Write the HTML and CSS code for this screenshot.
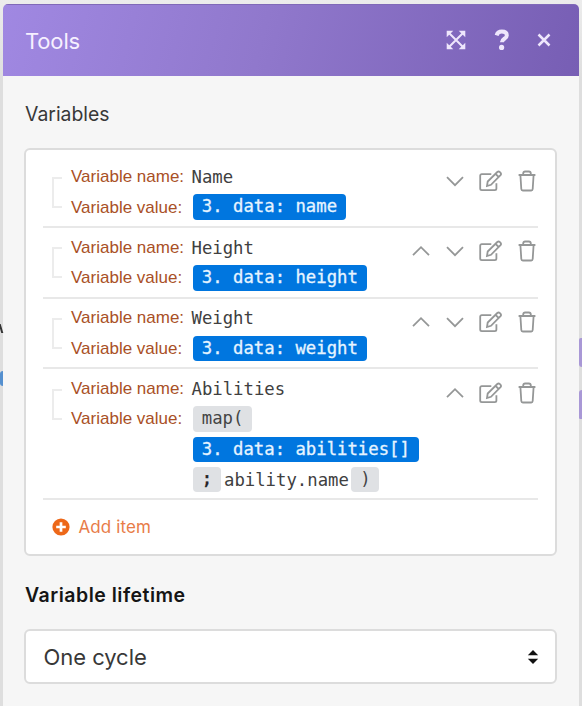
FILE: index.html
```
<!DOCTYPE html>
<html lang="en">
<head>
<meta charset="utf-8">
<title>Tools</title>
<link rel="stylesheet" href="styles.css">
</head>
<body>
<svg class="defs" width="0" height="0" aria-hidden="true">
  <symbol id="up" viewBox="0 0 18 20"><path d="M1 14.2 9 6.2l8 8"/></symbol>
  <symbol id="down" viewBox="0 0 18 20"><path d="M1 6.2l8 8 8-8"/></symbol>
  <symbol id="edit" viewBox="0 0 24 22"><path d="M12.300 4.200H2.800Q1.200 4.200 1.200 5.800v12.800q0 1.600 1.600 1.600h13q1.600 0 1.600-1.600v-5.300M8 16l.7-4.500L18.300 2q1.300-1.100 2.600.1l.5.500q1.200 1.300.1 2.600L12 14.800zM16.500 3.800l3.200 3.200"/></symbol>
  <symbol id="trash" viewBox="0 0 18 22"><path d="M.6 5h16.800M2.400 5l.9 14q.1 1.500 1.500 1.500h8.400q1.400 0 1.500-1.500l.9-14M5.200 4.600V3.500q0-2 2-2h3.600q2 0 2 2v1.100"/></symbol>
</svg>
<i class="peek peek-line"></i><i class="peek peek-blue"></i><i class="peek peek-a"></i><i class="peek peek-b"></i>
<main class="panel">
  <header class="bar">
    <h1>Tools</h1>
    <svg class="expand" viewBox="0 0 20 20"><path class="stroke" d="M3.500 3.500l13 13M16.500 3.500l-13 13"/><path d="M.7.7h6.600L.7 7.300zM19.300.7v6.600L12.700.7zM.7 19.300v-6.600l6.600 6.600zM19.300 19.300h-6.600l6.600-6.600z"/></svg>
    <svg class="help" viewBox="0 0 16 22"><path class="stroke" d="M2.600 6.300C3.400 3.800 5.200 2.600 7.800 2.600c3 0 5 1.400 5 3.800 0 3.500-4.900 3.200-4.900 6.800"/><circle cx="7.600" cy="18.400" r="2.600"/></svg>
    <svg class="close" viewBox="0 0 14 14"><path class="stroke" d="M1.500 1.500l11 11M12.500 1.500l-11 11"/></svg>
  </header>
  <div class="body">
    <h2 class="title">Variables</h2>
    <section class="card">
      <div class="row">
        <span class="bracket"></span>
        <div class="fields">
          <div class="label">Variable name:</div><div class="val">Name</div>
          <div class="label">Variable value:</div><div class="val"><span class="chip">3. data: name</span></div>
        </div>
        <div class="acts"><svg class="chev"><use href="#down"/></svg><svg class="edit"><use href="#edit"/></svg><svg class="trash"><use href="#trash"/></svg></div>
      </div>
      <div class="row">
        <span class="bracket"></span>
        <div class="fields">
          <div class="label">Variable name:</div><div class="val">Height</div>
          <div class="label">Variable value:</div><div class="val"><span class="chip">3. data: height</span></div>
        </div>
        <div class="acts"><svg class="chev"><use href="#up"/></svg><svg class="chev"><use href="#down"/></svg><svg class="edit"><use href="#edit"/></svg><svg class="trash"><use href="#trash"/></svg></div>
      </div>
      <div class="row">
        <span class="bracket"></span>
        <div class="fields">
          <div class="label">Variable name:</div><div class="val">Weight</div>
          <div class="label">Variable value:</div><div class="val"><span class="chip">3. data: weight</span></div>
        </div>
        <div class="acts"><svg class="chev"><use href="#up"/></svg><svg class="chev"><use href="#down"/></svg><svg class="edit"><use href="#edit"/></svg><svg class="trash"><use href="#trash"/></svg></div>
      </div>
      <div class="row">
        <span class="bracket"></span>
        <div class="fields">
          <div class="label">Variable name:</div><div class="val">Abilities</div>
          <div class="label">Variable value:</div>
          <div class="stack">
            <div class="val"><span class="chip fn">map(</span></div>
            <div class="val"><span class="chip">3. data: abilities[]</span></div>
            <div class="val"><span class="chip fn strong">;</span><span class="plain">ability.name</span><span class="chip fn last">)</span></div>
          </div>
        </div>
        <div class="acts"><svg class="chev"><use href="#up"/></svg><svg class="edit"><use href="#edit"/></svg><svg class="trash"><use href="#trash"/></svg></div>
      </div>
      <div class="add"><svg viewBox="0 0 18 18"><circle cx="9" cy="9" r="8.600"/><path d="M9 4.200v9.600M4.200 9h9.600"/></svg><span>Add item</span></div>
    </section>
    <h2 class="title bold">Variable lifetime</h2>
    <div class="select"><span>One cycle</span><svg viewBox="0 0 12 16"><path d="M.8 6.300 6 1l5.200 5.300zM.8 9.700 6 15l5.200-5.300z"/></svg></div>
  </div>
</main>
</body>
</html>
```
FILE: styles.css
```
* { box-sizing: border-box; }
body { margin: 0; width: 582px; height: 706px; overflow: hidden; padding: 4px 3px 0; background: linear-gradient(#ececec, #dedede 80px); font-family: Inter, sans-serif; position: relative; }
.defs { position: absolute; }
h1, h2 { margin: 0; font-weight: 400; }
.panel { width: 576px; height: 702px; background: #f6f6f6; border-radius: 5px 5px 0 0; overflow: hidden; }
.bar { height: 72px; display: flex; align-items: center; padding: 0 28px 0 22px; background: linear-gradient(105deg, #a088e2, #9078cc 45%, #775eb4); border-top: 1px solid #8069b8; color: #fff; }
.bar h1 { flex: 1; font-size: 22px; line-height: 28px; letter-spacing: -.15px; color: #f6f0ff; }
.bar svg { fill: #eee6fc; color: #eee6fc; flex: none; position: relative; top: -1px; }
.bar .stroke { fill: none; stroke: currentColor; stroke-width: 2; }
.expand { width: 20px; height: 20px; margin-right: 27.500px; }
.help { width: 16px; height: 22px; margin-right: 27.500px; }
.help .stroke { stroke-width: 4; }
.close { width: 14px; height: 14px; }
.close .stroke { stroke-width: 2.500; }
.body { padding: 25px 22px 0 22px; }
.title { font-size: 19.400px; line-height: 26px; color: #383838; }
.card { margin: 21px 0 0 -1px; height: 408px; width: 533px; background: #fff; border: 2px solid #dcdcdc; border-radius: 6px; padding: 7.500px 17px 0; }
.row { display: flex; align-items: flex-start; padding: 4.300px 0 3.600px; border-bottom: 2px solid #e8e8e8; height: 70.600px; }
.row:nth-child(4) { height: 131.200px; }
.bracket { width: 10px; height: 31px; margin: 15px 9.500px 0 8.500px; border: 2px solid #ececec; border-right: 0; flex: none; }
.fields { flex: 1; display: grid; grid-template-columns: 120.500px 1fr; }
.label { font: 17px/30.300px "Liberation Sans", sans-serif; color: #a95026; white-space: nowrap; padding-top: .5px; height: 30.300px; }
.val { height: 30.300px; display: flex; align-items: center; white-space: pre; font: 17.300px/26px "DejaVu Sans Mono", monospace; color: #404040; }
.chip { margin-left: 1.500px; height: 25.500px; line-height: 25.500px; padding: 0 8.800px; border-radius: 4px; background: #0076df; color: #e6f4ff; -webkit-text-stroke: .3px currentColor; }
.fn { background: #dfe1e4; color: #444; -webkit-text-stroke: 0; }
.strong { color: #222; -webkit-text-stroke: .5px currentColor; }
.plain { margin-left: 3px; }
.last { margin-left: 2.500px; }
.acts { display: flex; align-items: center; height: 22px; margin-top: 8px; padding-right: 2px; }
.acts svg { fill: none; stroke: #959797; stroke-width: 1.800; }
.chev { width: 18px; height: 20px; margin-right: 15.500px; }
.edit { width: 24px; height: 22px; margin-right: 15px; }
.trash { width: 18px; height: 22px; }
.add { display: flex; align-items: center; height: 53px; padding-left: 9px; color: #e87c48; font-size: 17px; letter-spacing: .1px; }
.add svg { width: 18px; height: 18px; margin-right: 8.500px; fill: #ed6819; }
.add path { stroke: #fff; stroke-width: 2.700; }
.bold { margin-top: 26px; font-weight: 600; font-size: 19.500px; letter-spacing: .5px; color: #151515; }
.select { width: 533px; height: 55px; margin: 21px 0 0 -1px; border: 2px solid #dcdcdc; border-radius: 6px; background: #fff; padding: 0 16px 0 17.500px; display: flex; align-items: center; justify-content: space-between; font-size: 22px; letter-spacing: -.05px; color: #383838; }
.select svg { width: 12px; height: 16px; fill: #111; }
.peek { position: absolute; }
.peek-line { left: 0; top: 324px; width: 2px; height: 9px; background: #333; transform: skewX(16deg); }
.peek-blue { left: 0; top: 371px; width: 3px; height: 15px; background: #5590cf; border-radius: 3px 0 0 3px; }
.peek-a, .peek-b { left: 579px; width: 3px; background: #a998d6; z-index: 1; }
.peek-a { top: 338px; height: 29px; border-radius: 3px 0 0 5px; }
.peek-b { top: 390px; height: 29px; border-radius: 5px 0 0 2px; }
```
